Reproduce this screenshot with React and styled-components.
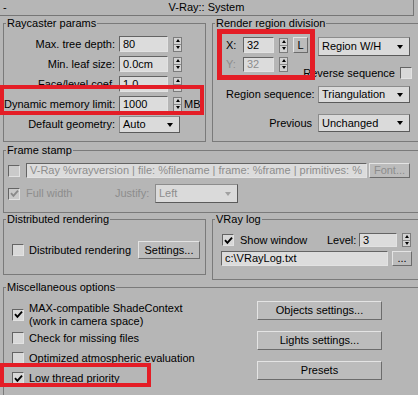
import React from 'react';
import styled, { createGlobalStyle, css } from 'styled-components';

const Global = createGlobalStyle`
  html, body { margin: 0; padding: 0; background: #b6b6b6; overflow: hidden; }
  body { font: 11px/13px "Liberation Sans", Arial, sans-serif; color: #000; }
  * { box-sizing: border-box; }
`;

const sunken = css`
  border: 1px solid;
  border-color: #646464 #e2e2e2 #e2e2e2 #646464;
`;

const raised = css`
  border: 1px solid;
  border-color: #e4e4e4 #6c6c6c #6c6c6c #e4e4e4;
`;

const Rollout = styled.div`
  position: relative;
  width: 418px;
  height: 395px;
  overflow: hidden;
`;

const TitleBar = styled.div`
  display: grid;
  grid-template-columns: 14px 1fr 14px;
  align-items: center;
  width: 414px;
  height: 16px;
  border-right: 1px solid #767676;
  border-bottom: 1px solid #767676;
  text-align: center;
`;

const Collapse = styled.span`
  text-align: left;
  padding-left: 3px;
`;

const Body = styled.div`
  display: flex;
  flex-direction: column;
  width: 440px;
  padding-left: 3px;
`;

const TwoCol = styled.div`
  display: grid;
  grid-template-columns: 203px 1fr;
  column-gap: 6px;
  align-items: ${p => p.$align || 'stretch'};
  margin-top: ${p => p.$mt || 0}px;
`;

const Group = styled.fieldset`
  margin: ${p => p.$mt || 0}px 0 0 0;
  padding: 0;
  min-width: 0;
  border: 1px solid #7a7a7a;
`;

const Caption = styled.legend`
  margin-left: 2px;
  padding: 0 1px;
  line-height: 12px;
`;

/* ---------- basic controls ---------- */

const NumInput = styled.div`
  ${sunken};
  flex: none;
  width: ${p => p.$w}px;
  height: ${p => p.$h || 16}px;
  background: #dcdcdc;
  padding-left: 3px;
  line-height: ${p => (p.$h || 16) - 2}px;
  color: ${p => (p.$disabled ? '#8d8d8d' : '#000')};
  white-space: nowrap;
  overflow: hidden;
`;

const SpinBox = styled.span`
  display: flex;
  flex-direction: column;
  flex: none;
  width: 9px;
  height: ${p => p.$h || 15}px;
  border: 1px solid #7c7c7c;
  background: #d2d2d2;
  justify-self: end;
`;

const SpinHalf = styled.span`
  flex: 1;
  display: flex;
  align-items: center;
  justify-content: center;
  &::after {
    content: '';
    border-left: 2.5px solid transparent;
    border-right: 2.5px solid transparent;
    ${p => (p.$down ? 'border-top: 3px solid #000;' : 'border-bottom: 3px solid #000;')}
  }
  & + & { border-top: 1px solid #8a8a8a; }
`;

const Spinner = ({ h }) => (
  <SpinBox $h={h}>
    <SpinHalf />
    <SpinHalf $down />
  </SpinBox>
);

const Select = styled.div`
  display: flex;
  align-items: center;
  justify-content: space-between;
  width: ${p => p.$w}px;
  height: ${p => p.$h || 18}px;
  padding: 0 6px 0 3px;
  background: #dadada;
  border: 1px solid;
  border-color: #8c8c8c #5a5a5a #5a5a5a #8c8c8c;
  color: ${p => (p.$disabled ? '#8d8d8d' : '#000')};
  &::after {
    content: '';
    border-left: 3.5px solid transparent;
    border-right: 3.5px solid transparent;
    border-top: 4px solid ${p => (p.$disabled ? '#a0a0a0' : '#000')};
  }
`;

const Button = styled.div`
  ${raised};
  display: flex;
  align-items: center;
  justify-content: center;
  flex: none;
  width: ${p => p.$w}px;
  height: ${p => p.$h || 19}px;
  background: #bcbcbc;
  color: ${p => (p.$disabled ? '#8d8d8d' : '#000')};
  white-space: nowrap;
`;

const Box = styled.span`
  ${sunken};
  display: inline-flex;
  align-items: center;
  justify-content: center;
  flex: none;
  width: 12px;
  height: 12px;
  background: ${p => (p.$disabled ? '#cacaca' : '#d8d8d8')};
`;

const CheckBox = ({ checked, disabled }) => (
  <Box $disabled={disabled}>
    {checked && (
      <svg width="9" height="9" viewBox="0 0 9 9">
        <path
          d="M1 4.2 L3.4 6.8 L8 1.6"
          fill="none"
          stroke={disabled ? '#8a8a8a' : '#000'}
          strokeWidth="1.9"
        />
      </svg>
    )}
  </Box>
);

const Check = styled.div`
  display: flex;
  align-items: center;
  gap: ${p => p.$gap || 6}px;
  white-space: nowrap;
  color: ${p => (p.$disabled ? '#8d8d8d' : '#000')};
`;

/* ---------- raycaster ---------- */

const ParamGrid = styled.div`
  display: grid;
  grid-template-columns: 115px 49px 14px auto;
  grid-template-rows: repeat(4, 16px) 17px;
  row-gap: 4px;
  align-items: center;
  padding: 7px 0 8px 0;
`;

const FieldLabel = styled.span`
  text-align: ${p => (p.$left ? 'left' : 'right')};
  padding-right: ${p => p.$pr ?? 4}px;
  white-space: nowrap;
  color: ${p => (p.$disabled ? '#8d8d8d' : '#000')};
`;

const Unit = styled.span`
  padding-left: 2px;
`;

const GeoSelect = styled(Select)`
  grid-column: 2 / span 2;
`;

/* ---------- render region ---------- */

const RegionBody = styled.div`
  padding: 8px 0 0 13px;
`;

const RegionTop = styled.div`
  display: flex;
  align-items: flex-start;
`;

const XYGrid = styled.div`
  display: grid;
  grid-template-columns: 17px 31px 14px 20px;
  grid-template-rows: 16px 16px;
  row-gap: 3px;
  align-items: center;
`;

const LockButton = styled(Button)`
  justify-self: end;
`;

const RegionSide = styled.div`
  display: flex;
  flex-direction: column;
  margin-left: 10px;
  width: 94px;
`;

const ReverseRow = styled.div`
  display: flex;
  justify-content: flex-end;
  align-items: center;
  gap: 5px;
  height: 12px;
  margin-top: 11px;
  white-space: nowrap;
`;

const SeqGrid = styled.div`
  display: grid;
  grid-template-columns: 86px 92px;
  grid-template-rows: 17px 18px;
  column-gap: 6px;
  row-gap: 11px;
  align-items: center;
  margin-top: 7px;
`;

/* ---------- frame stamp ---------- */

const StampBody = styled.div`
  padding: 7px 0 9px 4px;
`;

const StampRow = styled.div`
  display: flex;
  align-items: center;
  gap: 6px;
  height: 15px;
`;

const StampTools = styled.div`
  display: flex;
  gap: 2px;
`;

const JustifyRow = styled.div`
  display: grid;
  grid-template-columns: 107px 40px 83px;
  align-items: center;
  height: 19px;
  margin-top: 6px;
`;

/* ---------- distributed / log ---------- */

const DistBody = styled.div`
  display: flex;
  align-items: center;
  padding: 16px 5px 15px 8px;
`;

const PushRight = styled.div`
  margin-left: auto;
`;

const LogBody = styled.div`
  padding: 8px 0 13px 9px;
`;

const LogRow = styled.div`
  display: flex;
  align-items: center;
  height: ${p => p.$h || 14}px;
  margin-top: ${p => p.$mt || 0}px;
  margin-left: ${p => p.$ml || 0}px;
  gap: ${p => p.$gap || 0}px;
`;

const ShowCell = styled.div`
  width: 105px;
  flex: none;
`;

const LevelLabel = styled.span`
  width: 32px;
  flex: none;
`;

const SpinSlot = styled.span`
  display: flex;
  margin-left: 5px;
`;

/* ---------- misc ---------- */

const MiscBody = styled.div`
  display: grid;
  grid-template-columns: 253px 125px;
  align-items: start;
  padding: 8px 0 30px 0;
`;

const MiscList = styled.div`
  display: flex;
  flex-direction: column;
  padding-left: 8px;
`;

const MiscItem = styled(Check)`
  min-height: ${p => p.$h || 20}px;
  gap: 5px;
`;

const TwoLines = styled.span`
  display: flex;
  flex-direction: column;
  line-height: 13px;
`;

const ButtonStack = styled.div`
  display: flex;
  flex-direction: column;
  gap: 11px;
`;

/* ---------- annotation marks ---------- */

const Mark = styled.div`
  position: absolute;
  left: ${p => p.$x}px;
  top: ${p => p.$y}px;
  width: ${p => p.$w}px;
  height: ${p => p.$h}px;
  border: ${p => p.$t}px solid #e41d26;
  pointer-events: none;
`;

export default function App() {
  return (
    <Rollout>
      <Global />
      <TitleBar>
        <Collapse>-</Collapse>
        <span>V-Ray:: System</span>
        <span />
      </TitleBar>

      <Body>
        <TwoCol $mt={1}>
          <Group>
            <Caption>Raycaster params</Caption>
            <ParamGrid>
              <FieldLabel>Max. tree depth:</FieldLabel>
              <NumInput $w={49}>80</NumInput>
              <Spinner />
              <span />

              <FieldLabel>Min. leaf size:</FieldLabel>
              <NumInput $w={49}>0.0cm</NumInput>
              <Spinner />
              <span />

              <FieldLabel>Face/level coef.</FieldLabel>
              <NumInput $w={49}>1.0</NumInput>
              <Spinner />
              <span />

              <FieldLabel>Dynamic memory limit:</FieldLabel>
              <NumInput $w={49}>1000</NumInput>
              <Spinner />
              <Unit>MB</Unit>

              <FieldLabel>Default geometry:</FieldLabel>
              <GeoSelect $w={61} $h={17}>Auto</GeoSelect>
            </ParamGrid>
          </Group>

          <Group>
            <Caption>Render region division</Caption>
            <RegionBody>
              <RegionTop>
                <XYGrid>
                  <FieldLabel $left $pr={0}>X:</FieldLabel>
                  <NumInput $w={31}>32</NumInput>
                  <Spinner />
                  <LockButton $w={15} $h={16}>L</LockButton>
                  <FieldLabel $left $disabled $pr={0}>Y:</FieldLabel>
                  <NumInput $w={31} $h={15} $disabled>32</NumInput>
                  <Spinner />
                  <span />
                </XYGrid>
                <RegionSide>
                  <Select $w={92} $h={19}>Region W/H</Select>
                  <ReverseRow>
                    Reverse sequence
                    <CheckBox />
                  </ReverseRow>
                </RegionSide>
              </RegionTop>
              <SeqGrid>
                <FieldLabel $pr={0}>Region sequence:</FieldLabel>
                <Select $w={92} $h={17}>Triangulation</Select>
                <FieldLabel $pr={0}>Previous</FieldLabel>
                <Select $w={92} $h={18}>Unchanged</Select>
              </SeqGrid>
            </RegionBody>
          </Group>
        </TwoCol>

        <Group $mt={2}>
          <Caption>Frame stamp</Caption>
          <StampBody>
            <StampRow>
              <CheckBox disabled />
              <StampTools>
                <NumInput $w={341} $h={15} $disabled>
                  V-Ray %vrayversion | file: %filename | frame: %frame | primitives: %
                </NumInput>
                <Button $w={41} $h={15} $disabled>Font...</Button>
              </StampTools>
            </StampRow>
            <JustifyRow>
              <Check $disabled>
                <CheckBox checked disabled />
                Full width
              </Check>
              <FieldLabel $left $disabled $pr={0}>Justify:</FieldLabel>
              <Select $w={83} $h={19} $disabled>Left</Select>
            </JustifyRow>
          </StampBody>
        </Group>

        <TwoCol $align="start">
          <Group>
            <Caption>Distributed rendering</Caption>
            <DistBody>
              <Check $gap={5}>
                <CheckBox />
                Distributed rendering
              </Check>
              <PushRight>
                <Button $w={62} $h={18}>Settings...</Button>
              </PushRight>
            </DistBody>
          </Group>

          <Group>
            <Caption>VRay log</Caption>
            <LogBody>
              <LogRow>
                <ShowCell>
                  <Check>
                    <CheckBox checked />
                    Show window
                  </Check>
                </ShowCell>
                <LevelLabel>Level:</LevelLabel>
                <NumInput $w={38} $h={14}>3</NumInput>
                <SpinSlot>
                  <Spinner h={14} />
                </SpinSlot>
              </LogRow>
              <LogRow $mt={4} $h={15} $gap={4} $ml={-1}>
                <NumInput $w={167} $h={15}>c:\VRayLog.txt</NumInput>
                <Button $w={20} $h={15}>...</Button>
              </LogRow>
            </LogBody>
          </Group>
        </TwoCol>

        <Group $mt={1}>
          <Caption>Miscellaneous options</Caption>
          <MiscBody>
            <MiscList>
              <MiscItem $h={27}>
                <CheckBox checked />
                <TwoLines>
                  <span>MAX-compatible ShadeContext</span>
                  <span>(work in camera space)</span>
                </TwoLines>
              </MiscItem>
              <MiscItem>
                <CheckBox />
                Check for missing files
              </MiscItem>
              <MiscItem>
                <CheckBox />
                Optimized atmospheric evaluation
              </MiscItem>
              <MiscItem>
                <CheckBox checked />
                Low thread priority
              </MiscItem>
            </MiscList>
            <ButtonStack>
              <Button $w={125}>Objects settings...</Button>
              <Button $w={125}>Lights settings...</Button>
              <Button $w={125}>Presets</Button>
            </ButtonStack>
          </MiscBody>
        </Group>
      </Body>

      <Mark $x={0} $y={85} $w={204} $h={30} $t={4} />
      <Mark $x={217} $y={29} $w={98} $h={51} $t={5} />
      <Mark $x={0} $y={363} $w={151} $h={24} $t={4} />
    </Rollout>
  );
}
